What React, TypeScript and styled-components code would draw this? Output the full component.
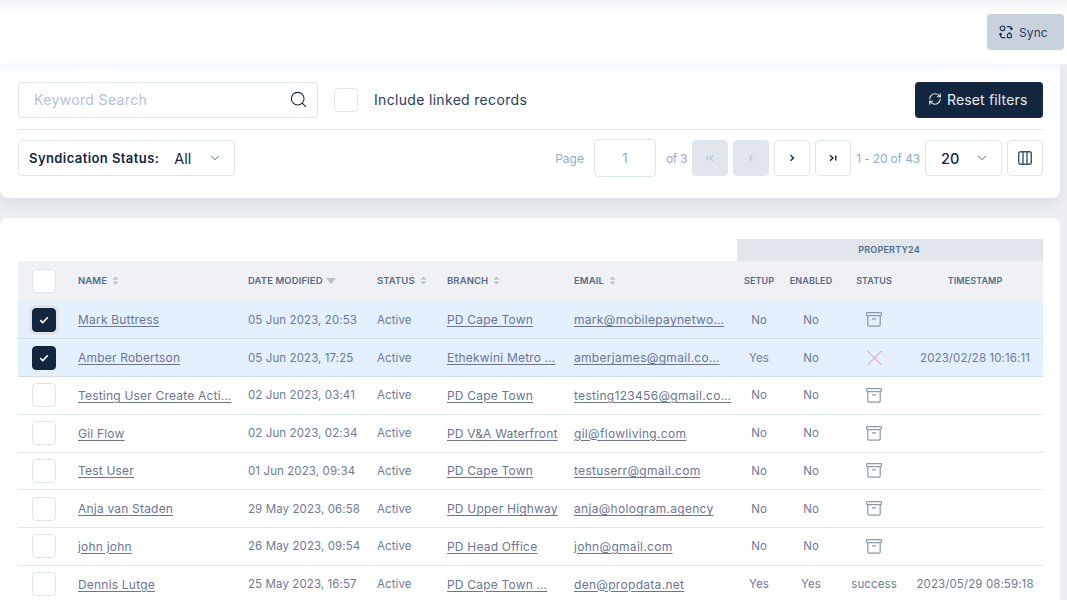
import * as React from 'react';
import styled, { createGlobalStyle } from 'styled-components';
import { Search, ChevronDown, RefreshCw } from 'lucide-react';

const GlobalStyle = createGlobalStyle`
	html, body {
		margin: 0;
		padding: 0;
		height: 100%;
		overflow: hidden;
		background: #eceef2;
		font-family: Inter, "Liberation Sans", sans-serif;
		color: #12263f;
	}
	* { box-sizing: border-box; }
`;

const Page = styled.div`
	width: 1067px;
	height: 600px;
	overflow: hidden;
	display: flex;
	flex-direction: column;
`;

const TopBar = styled.div`
	flex: none;
	height: 64px;
	background: linear-gradient(#f1f2f5 0, #fff 12px);
	display: flex;
	justify-content: flex-end;
	padding: 14px 3px 0 0;
`;

const SyncButton = styled.button`
	width: 77px;
	height: 36px;
	border: 0;
	border-radius: 4px;
	background: #c9d2dc;
	color: #283e5a;
	font: 12px Inter, sans-serif;
	letter-spacing: 0.1px;
	display: flex;
	align-items: center;
	gap: 6px;
	padding: 0 0 0 12px;
`;

const FilterCard = styled.section`
	flex: none;
	width: 1060px;
	height: 134px;
	background: linear-gradient(#f6f7f9 0, #fff 10px);
	border-radius: 0 0 8px 8px;
	box-shadow: 0 6px 14px rgba(20, 40, 70, 0.08);
	padding: 18px 17px 0 18px;
`;

const FilterRow = styled.div`
	height: 48px;
	border-bottom: 1px solid #e0e6ec;
	display: flex;
	align-items: flex-start;
`;

const SearchBox = styled.div`
	width: 300px;
	height: 36px;
	border: 1px solid #e0e6ec;
	border-radius: 4px;
	display: flex;
	align-items: center;
	justify-content: space-between;
	padding: 0 9px 1px 15px;
	font-size: 14px;
	letter-spacing: 0.35px;
	color: #b1c2d9;
`;

const Box = styled.span<{ $checked?: boolean; $ring?: boolean }>`
	width: 24px;
	height: 24px;
	border: 1px solid ${(p) => (p.$checked ? '#12263f' : '#e0e6ec')};
	border-radius: 4px;
	background: ${(p) => (p.$checked ? '#12263f' : '#fff')};
	display: inline-flex;
	align-items: center;
	justify-content: center;
	vertical-align: middle;
	box-shadow: ${(p) => (p.$ring ? '0 0 0 3px #dfe3e8' : 'none')};
`;

const LinkedCheck = styled.label`
	margin: 6px 0 0 16px;
	display: flex;
	align-items: center;
	gap: 16px;
	font-size: 14px;
	letter-spacing: 0.32px;
	line-height: 22px;
	color: #283e5a;
`;

const ResetButton = styled.button`
	margin-left: auto;
	width: 128px;
	height: 36px;
	border: 0;
	border-radius: 4px;
	background: #12263f;
	color: #e8edf3;
	font: 14px Inter, sans-serif;
	letter-spacing: 0.15px;
	display: flex;
	align-items: center;
	gap: 5px;
	padding: 0 0 2px 13px;
`;

const PagerRow = styled.div`
	display: flex;
	align-items: center;
	height: 38px;
	margin-top: 9px;
`;

const StatusSelect = styled.div`
	width: 217px;
	height: 36px;
	border: 1px solid #e0e6ec;
	border-radius: 4px;
	display: flex;
	align-items: center;
	padding: 0 12px 0 10px;
	font-size: 14.5px;
`;

const StatusLabel = styled.span`
	font-size: 13px;
	font-weight: 600;
	letter-spacing: 0.42px;
	margin-right: 15px;
`;

const StatusChevron = styled(ChevronDown)`
	margin-left: auto;
`;

const Pager = styled.div`
	margin-left: auto;
	display: flex;
	align-items: center;
	color: #95aac9;
	font-size: 12px;
`;

const PageInput = styled.div`
	width: 62px;
	height: 38px;
	margin: 0 10px;
	border: 1px solid #e0e6ec;
	border-radius: 4px;
	display: flex;
	align-items: center;
	justify-content: center;
	font-size: 13.5px;
`;

const PageCount = styled.span`
	letter-spacing: -0.3px;
`;

const PageButton = styled.span<{ $disabled?: boolean }>`
	width: 36px;
	height: 36px;
	margin-left: 5px;
	border-radius: 4px;
	border: 1px solid #e0e6ec;
	background: ${(p) => (p.$disabled ? '#e0e6ec' : '#fff')};
	color: ${(p) => (p.$disabled ? '#b9c6d6' : '#12263f')};
	display: flex;
	align-items: center;
	justify-content: center;
`;

const PageTotal = styled.span`
	margin: 0 5px;
	letter-spacing: -0.15px;
`;

const SizeSelect = styled.div`
	width: 77px;
	height: 36px;
	border: 1px solid #e0e6ec;
	border-radius: 4px;
	display: flex;
	align-items: center;
	justify-content: space-between;
	padding: 0 12px 0 15px;
	font-size: 14.5px;
	font-weight: 500;
	color: #12263f;
`;

const ColumnsButton = styled.span`
	width: 36px;
	height: 36px;
	margin-left: 5px;
	border: 1px solid #e0e6ec;
	border-radius: 4px;
	display: flex;
	align-items: center;
	justify-content: center;
`;

const TableCard = styled.section`
	flex: none;
	width: 1060px;
	height: 382px;
	margin-top: 20px;
	background: #fff;
	border-radius: 8px 8px 0 0;
	padding: 21px 17px 0 18px;
`;

const Table = styled.table`
	width: 1025px;
	table-layout: fixed;
	border-collapse: collapse;
	font-size: 11.5px;
	color: #6e84a3;
`;

const GroupCell = styled.th`
	height: 22px;
	padding: 0 2px 1px 0;
	background: #e0e6ec;
	color: #536b88;
	font-size: 9px;
	font-weight: 600;
	letter-spacing: 0.2px;
	text-align: center;
`;

const HeadCell = styled.th<{ $center?: boolean }>`
	height: 40px;
	padding: 0 0 2px ${(p) => (p.$center ? 0 : 8)}px;
	background: #f0f1f5;
	color: #536b88;
	font-size: ${(p) => (p.$center ? 9 : 9.5)}px;
	font-weight: 600;
	letter-spacing: 0.1px;
	white-space: nowrap;
	text-align: ${(p) => (p.$center ? 'center' : 'left')};
`;

const HeadCheckCell = styled(HeadCell)`
	padding: 0 0 0 14px;
`;

const SortMark = styled.svg<{ $gap: number }>`
	margin-left: ${(p) => p.$gap}px;
	vertical-align: -1px;
`;

const Row = styled.tr<{ $selected?: boolean }>`
	height: 37.75px;
	background: ${(p) => (p.$selected ? '#e3f0fd' : '#fff')};
	border-bottom: 1px solid ${(p) => (p.$selected ? '#cfdfec' : '#e0e6ec')};
`;

const Cell = styled.td<{ $center?: boolean }>`
	padding: 0 0 0 ${(p) => (p.$center ? 0 : 8)}px;
	white-space: nowrap;
	overflow: hidden;
	color: #6c7a96;
	letter-spacing: 0.1px;
	text-align: ${(p) => (p.$center ? 'center' : 'left')};
`;

const CheckCell = styled.td`
	padding: 0 0 0 14px;
`;

const RecordLink = styled.a<{ $wide?: boolean }>`
	color: #6c7593;
	font-size: 12px;
	letter-spacing: ${(p) => (p.$wide ? 0.3 : 0.2)}px;
	text-decoration: underline;
	text-underline-offset: 2px;
`;

const IconSlot = styled.span`
	display: flex;
	justify-content: center;
	align-items: center;
`;

const columns = [52, 170, 129, 70, 127, 171, 44, 60, 66, 136];

interface IRecord {
	name: string;
	date: string;
	branch: string;
	email: string;
	setup: string;
	enabled: string;
	status: 'archive' | 'failed' | 'success';
	timestamp: string;
	selected?: boolean;
	ring?: boolean;
}

const records: IRecord[] = [
	{ name: 'Mark Buttress', date: '05 Jun 2023, 20:53', branch: 'PD Cape Town', email: 'mark@mobilepaynetwo…', setup: 'No', enabled: 'No', status: 'archive', timestamp: '', selected: true, ring: true },
	{ name: 'Amber Robertson', date: '05 Jun 2023, 17:25', branch: 'Ethekwini Metro …', email: 'amberjames@gmail.co…', setup: 'Yes', enabled: 'No', status: 'failed', timestamp: '2023/02/28 10:16:11', selected: true },
	{ name: 'Testing User Create Acti…', date: '02 Jun 2023, 03:41', branch: 'PD Cape Town', email: 'testing123456@gmail.co…', setup: 'No', enabled: 'No', status: 'archive', timestamp: '' },
	{ name: 'Gil Flow', date: '02 Jun 2023, 02:34', branch: 'PD V&A Waterfront', email: 'gil@flowliving.com', setup: 'No', enabled: 'No', status: 'archive', timestamp: '' },
	{ name: 'Test User', date: '01 Jun 2023, 09:34', branch: 'PD Cape Town', email: 'testuserr@gmail.com', setup: 'No', enabled: 'No', status: 'archive', timestamp: '' },
	{ name: 'Anja van Staden', date: '29 May 2023, 06:58', branch: 'PD Upper Highway', email: 'anja@hologram.agency', setup: 'No', enabled: 'No', status: 'archive', timestamp: '' },
	{ name: 'john john', date: '26 May 2023, 09:54', branch: 'PD Head Office', email: 'john@gmail.com', setup: 'No', enabled: 'No', status: 'archive', timestamp: '' },
	{ name: 'Dennis Lutge', date: '25 May 2023, 16:57', branch: 'PD Cape Town …', email: 'den@propdata.net', setup: 'Yes', enabled: 'Yes', status: 'success', timestamp: '2023/05/29 08:59:18' },
];

const Sort: React.FC<{ active?: boolean }> = ({ active }) => (
	<SortMark $gap={active ? 3 : 5} width={active ? 10 : 7} height="9" viewBox={active ? '0 0 10 9' : '0 0 7 9'}>
		{active
			? <path d="M0 2h10L5 8z" fill="#b4c0cf" />
			: <path d="M3.5 .5L6.5 3.5H.5zM3.5 8.5L.5 5.5H6.5z" fill="#b4c0cf" />}
	</SortMark>
);

const SyncIcon = () => (
	<svg width="14" height="14" viewBox="0 0 14 14" fill="none" stroke="#1f3450" strokeWidth="1.2" strokeLinecap="round" strokeLinejoin="round">
		<circle cx="3.5" cy="3.3" r="2.3" />
		<path d="M8.2 1.7h2.2c1.1 0 2 .8 2 1.9v1M13.4 3.6l-1 1.1-1-1.1" />
		<path d="M5.8 12.6H3.6c-1.1 0-2-.8-2-1.9V8.3M.6 9.4l1-1.1 1 1.1" />
		<path d="M8.4 9.6l2-1.8 2 1.8v2.2c0 .5-.4.9-.9.9H9.3c-.5 0-.9-.4-.9-.9z" />
	</svg>
);

const ArchiveIcon = () => (
	<svg width="16" height="15" viewBox="0 0 16 15" fill="none" stroke="#8a99ae" strokeWidth="1.2">
		<rect x="0.6" y="0.6" width="14.8" height="3" rx="0.8" />
		<path d="M1.8 3.6v9.2c0 .8.5 1.3 1.3 1.3h9.8c.8 0 1.3-.5 1.3-1.3V3.6M6 6.8h4" />
	</svg>
);

const CrossIcon = () => (
	<svg width="15" height="14" viewBox="0 0 15 14" fill="none" stroke="#f5868e" strokeWidth="1">
		<path d="M.5 0l14 14M14.5 0L.5 14" />
	</svg>
);

const Tick = () => (
	<svg width="10" height="8" viewBox="0 0 10 8" fill="none" stroke="#fff" strokeWidth="1.6">
		<path d="M1.2 4.2l2.6 2.4 5-5.4" />
	</svg>
);

const Chevron: React.FC<{ d: string; color: string }> = ({ d, color }) => (
	<svg width="10" height="10" viewBox="0 0 10 10" fill="none" stroke={color} strokeWidth="1.4">
		<path d={d} />
	</svg>
);

const ColumnsIcon = () => (
	<svg width="14" height="14" viewBox="0 0 14 14" fill="none" stroke="#3d5370" strokeWidth="1.4">
		<rect x="0.7" y="0.7" width="12.6" height="12.6" rx="2" />
		<path d="M5 .7v12.6M9 .7v12.6" />
	</svg>
);

const StatusMark: React.FC<{ status: IRecord['status'] }> = ({ status }) => {
	switch (status) {
		case 'archive': {
			return <IconSlot><ArchiveIcon /></IconSlot>;
		}
		case 'failed': {
			return <IconSlot><CrossIcon /></IconSlot>;
		}
		case 'success': {
			return <>success</>;
		}
	}
};

const App: React.FC = () => (
	<Page>
		<GlobalStyle />
		<TopBar>
			<SyncButton><SyncIcon />Sync</SyncButton>
		</TopBar>
		<FilterCard>
			<FilterRow>
				<SearchBox>
					Keyword Search
					<Search size={19} color="#12263f" strokeWidth={1.3} />
				</SearchBox>
				<LinkedCheck><Box />Include linked records</LinkedCheck>
				<ResetButton><RefreshCw size={14} strokeWidth={1.8} />Reset filters</ResetButton>
			</FilterRow>
			<PagerRow>
				<StatusSelect>
					<StatusLabel>Syndication Status:</StatusLabel>
					All
					<StatusChevron size={14} color="#283e5a" strokeWidth={1.3} />
				</StatusSelect>
				<Pager>
					Page
					<PageInput>1</PageInput>
					<PageCount>of 3</PageCount>
					<PageButton $disabled><Chevron d="M2.5 2.5v5M8 2.2L5 5l3 2.8" color="#b9c6d6" /></PageButton>
					<PageButton $disabled><Chevron d="M6.5 2.2L3.5 5l3 2.8" color="#b9c6d6" /></PageButton>
					<PageButton><Chevron d="M3.5 2.2L6.5 5l-3 2.8" color="#12263f" /></PageButton>
					<PageButton><Chevron d="M2 2.2L5 5 2 7.8M7.8 2.5v5" color="#12263f" /></PageButton>
					<PageTotal>1 - 20 of 43</PageTotal>
					<SizeSelect>20<ChevronDown size={14} color="#283e5a" strokeWidth={1.3} /></SizeSelect>
					<ColumnsButton><ColumnsIcon /></ColumnsButton>
				</Pager>
			</PagerRow>
		</FilterCard>
		<TableCard>
			<Table>
				<colgroup>
					{columns.map((w, i) => <col key={i} width={w} />)}
				</colgroup>
				<thead>
					<tr>
						<th colSpan={6} />
						<GroupCell colSpan={4}>PROPERTY24</GroupCell>
					</tr>
					<tr>
						<HeadCheckCell><Box /></HeadCheckCell>
						<HeadCell>NAME<Sort /></HeadCell>
						<HeadCell>DATE MODIFIED<Sort active /></HeadCell>
						<HeadCell>STATUS<Sort /></HeadCell>
						<HeadCell>BRANCH<Sort /></HeadCell>
						<HeadCell>EMAIL<Sort /></HeadCell>
						<HeadCell $center>SETUP</HeadCell>
						<HeadCell $center>ENABLED</HeadCell>
						<HeadCell $center>STATUS</HeadCell>
						<HeadCell $center>TIMESTAMP</HeadCell>
					</tr>
				</thead>
				<tbody>
					{records.map((r) => (
						<Row key={r.name} $selected={r.selected}>
							<CheckCell>
								<Box $checked={r.selected} $ring={r.ring}>{r.selected && <Tick />}</Box>
							</CheckCell>
							<Cell><RecordLink>{r.name}</RecordLink></Cell>
							<Cell>{r.date}</Cell>
							<Cell>Active</Cell>
							<Cell><RecordLink>{r.branch}</RecordLink></Cell>
							<Cell><RecordLink $wide>{r.email}</RecordLink></Cell>
							<Cell $center>{r.setup}</Cell>
							<Cell $center>{r.enabled}</Cell>
							<Cell $center><StatusMark status={r.status} /></Cell>
							<Cell $center>{r.timestamp}</Cell>
						</Row>
					))}
				</tbody>
			</Table>
		</TableCard>
	</Page>
);

export default App;
